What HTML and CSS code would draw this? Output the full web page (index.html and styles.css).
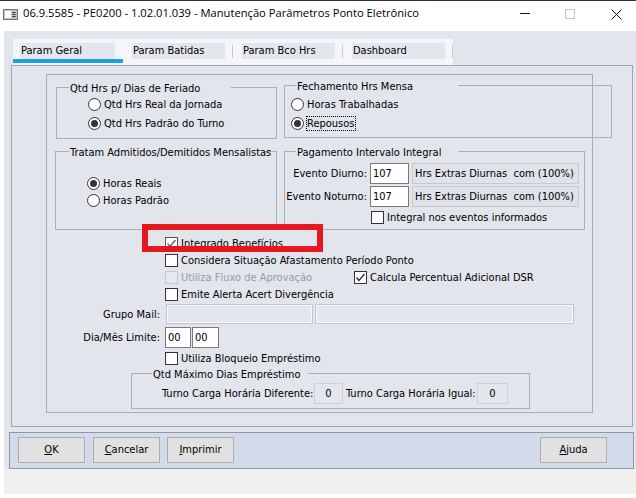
FILE: index.html
```html
<!DOCTYPE html>
<html lang="pt-BR">
<head>
<meta charset="utf-8">
<title>Manutenção Parâmetros Ponto Eletrônico</title>
<link rel="stylesheet" href="styles.css">
</head>
<body>
<div class="window">
  <div class="titlebar">
    <svg class="appicon" width="15" height="11" viewBox="0 0 15 11"><rect x="0.5" y="0.5" width="14" height="10" fill="#bfc3c8" stroke="#6f747b"/><rect x="2" y="2" width="6" height="7" fill="#fff"/><path d="M9.5 3.5h3M9.5 5.5h3M9.5 7.5h3" stroke="#2b2b2b"/></svg>
    <span class="title">06.9.5585 - PE0200 - 1.02.01.039 - Manutenção Parâmetros Ponto Eletrônico</span>
    <svg class="ctl min" width="10" height="1" viewBox="0 0 10 1"><rect width="10" height="1" fill="#111"/></svg>
    <svg class="ctl max" width="10" height="10" viewBox="0 0 10 10"><rect x="0.5" y="0.5" width="9" height="9" fill="none" stroke="#c4c4c4"/></svg>
    <svg class="ctl close" width="11" height="11" viewBox="0 0 11 11"><path d="M0.5 0.5L10.5 10.5M10.5 0.5L0.5 10.5" stroke="#111" stroke-width="1"/></svg>
  </div>

  <div class="client">
    <div class="tabs">
      <div class="tab active"><span class="tlabel">Param Geral</span><span class="ink"></span></div>
      <div class="tab"><span class="tlabel">Param Batidas</span><span class="tsep"></span></div>
      <div class="tab"><span class="tlabel">Param Bco Hrs</span><span class="tsep"></span></div>
      <div class="tab"><span class="tlabel">Dashboard</span><span class="tsep"></span></div>
    </div>

    <div class="panel">
      <div class="inner">
        <div class="grow">
          <fieldset class="grp g1">
            <legend class="lg1">Qtd Hrs p/ Dias de Feriado</legend>
            <div class="opt"><span class="radio"></span>Qtd Hrs Real da Jornada</div>
            <div class="opt"><span class="radio on"></span>Qtd Hrs Padrão do Turno</div>
          </fieldset>
          <fieldset class="grp g2">
            <legend class="lg2">Fechamento Hrs Mensa</legend>
            <div class="opt"><span class="radio"></span>Horas Trabalhadas</div>
            <div class="opt"><span class="radio on"></span><span class="focus">Repousos</span></div>
          </fieldset>
        </div>

        <div class="grow row2">
          <fieldset class="grp g3">
            <legend class="lg3">Tratam Admitidos/Demitidos Mensalistas</legend>
            <div class="opt short"><span class="radio on"></span>Horas Reais</div>
            <div class="opt short"><span class="radio"></span>Horas Padrão</div>
          </fieldset>
          <fieldset class="grp g4">
            <legend class="lg4">Pagamento Intervalo Integral</legend>
            <div class="evrow">
              <span class="evlabel">Evento Diurno:</span>
              <span class="inp ev">107</span>
              <span class="desc">Hrs Extras Diurnas&nbsp; com (100%)</span>
            </div>
            <div class="evrow">
              <span class="evlabel">Evento Noturno:</span>
              <span class="inp ev">107</span>
              <span class="desc">Hrs Extras Diurnas&nbsp; com (100%)</span>
            </div>
            <div class="cbrow integral"><span class="box"></span>Integral nos eventos informados</div>
          </fieldset>
        </div>

        <div class="checks">
          <div class="cbrow"><span class="box chk soft"><svg width="11" height="11" viewBox="0 0 11 11"><path d="M1.5 5.5L4 8.5L9.5 2" fill="none" stroke="#5a5a5a" stroke-width="1.2"/></svg></span>Integrado Benefícios</div>
          <div class="cbrow"><span class="box"></span>Considera Situação Afastamento Período Ponto</div>
          <div class="cbrow">
            <span class="cbitem wide disabled"><span class="box off"></span>Utiliza Fluxo de Aprovação</span>
            <span class="cbitem"><span class="box chk"><svg width="11" height="11" viewBox="0 0 11 11"><path d="M1.5 5.5L4 8.5L9.5 2" fill="none" stroke="#222" stroke-width="1.2"/></svg></span>Calcula Percentual Adicional DSR</span>
          </div>
          <div class="cbrow"><span class="box"></span>Emite Alerta Acert Divergência</div>
        </div>

        <div class="frow mail">
          <span class="flabel">Grupo Mail:</span>
          <span class="inp dis m1"></span>
          <span class="inp dis m2"></span>
        </div>
        <div class="frow dia">
          <span class="flabel">Dia/Mês Limite:</span>
          <span class="inp d1">00</span>
          <span class="inp d2">00</span>
        </div>
        <div class="cbrow bloq"><span class="box"></span>Utiliza Bloqueio Empréstimo</div>

        <fieldset class="grp g5">
          <legend class="lg5">Qtd Máximo Dias Empréstimo</legend>
          <div class="turno">
            <span class="tl1">Turno Carga Horária Diferente:</span>
            <span class="inp zero z1">0</span>
            <span class="tl2">Turno Carga Horária Igual:</span>
            <span class="inp zero z2">0</span>
          </div>
        </fieldset>
      </div>
    </div>

    <div class="buttons">
      <span class="btn b-ok"><u>O</u>K</span>
      <span class="btn b-cancel"><u>C</u>ancelar</span>
      <span class="btn"><u>I</u>mprimir</span>
      <span class="btn b-help"><u>A</u>juda</span>
    </div>
  </div>
  <div class="status"></div>

  <div class="highlight"></div>
</div>
</body>
</html>
```
FILE: styles.css
```css
* { box-sizing: border-box; }
html, body { margin: 0; padding: 0; }
body {
  width: 636px;
  height: 498px;
  overflow: hidden;
  background: #fff;
  color: #000;
  font-family: "DejaVu Sans Condensed", "DejaVu Sans", sans-serif;
  font-stretch: condensed;
  font-size: 11px;
}
.window {
  position: relative;
  width: 636px;
  height: 498px;
  display: flex;
  flex-direction: column;
}

/* title bar */
.titlebar {
  height: 31px;
  border-top: 1px solid #2d3440;
  display: flex;
  align-items: flex-start;
  flex-shrink: 0;
}
.appicon { margin: 8px 0 0 3px; }
.title {
  margin: 4px 0 0 5px;
  font-family: "Open Sans", sans-serif;
  font-stretch: normal;
  font-size: 11.2px;
  line-height: 16px;
  white-space: nowrap;
}
.ctl.min { margin: 12px 0 0 auto; }
.ctl.max { margin: 8px 0 0 35px; }
.ctl.close { margin: 8px 14px 0 36px; }

/* client area */
.client {
  margin-left: 4px;
  height: 438px;
  flex-shrink: 0;
  background: #e2e5ec;
  display: flex;
  flex-direction: column;
  align-items: flex-start;
}
.tabs {
  margin: 8px 0 0 9px;
  width: 440px;
  height: 26px;
  background: #f5f6f9;
  display: flex;
}
.tab {
  width: 110px;
  height: 26px;
  display: flex;
  align-items: flex-start;
}
.tlabel {
  margin: 4px 0 0 9px;
  width: 93px;
  height: 16px;
  line-height: 16px;
  padding-left: 1px;
  background: #e3e6ec;
  white-space: nowrap;
}
.tsep {
  margin: 6px 0 0 7px;
  width: 1px;
  height: 13px;
  background: #c5c9d1;
}
.tab.active { flex-direction: column; }
.tab.active .tlabel { margin-left: 7px; width: 95px; }
.ink {
  width: 110px;
  height: 4px;
  background: #1ba1e2;
}

.panel {
  margin-left: 7px;
  width: 622px;
  height: 362px;
  border: 1px solid #9ea4b0;
  flex-shrink: 0;
}
.inner {
  margin: 8px 0 0 34px;
  width: 547px;
  height: 339px;
  border: 1px solid #a7acb7;
  display: flex;
  flex-direction: column;
  align-items: flex-start;
}

/* group boxes */
.grow { display: flex; align-items: flex-start; }
.grp {
  margin: 0;
  padding: 0;
  min-width: 0;
  border: 1px solid #a9aeb8;
  flex-shrink: 0;
}
.grp legend {
  padding: 3px 0 0 1px;
  line-height: 13px;
  white-space: nowrap;
}
.g1 { margin: 4px 0 0 9px; width: 221px; height: 60px; padding: 0 0 0 31px; }
.g2 { margin: 2px 0 0 7px; width: 328px; height: 61px; padding: 2px 0 0 6px; }
.lg1 { margin-left: -19px; width: 162px; }
.lg2 { margin-left: 5px; width: 162px; }
.row2 { margin-top: 4px; }
.g3 { margin-left: 8px; width: 222px; height: 87px; padding: 16px 0 0 31px; }
.g4 { margin-left: 7px; width: 301px; height: 87px; padding: 4px 0 0 0; }
.lg3 { margin-left: -18px; width: 195px; }
.lg4 { margin-left: 11px; width: 162px; }

.opt {
  height: 19px;
  display: flex;
  align-items: center;
  white-space: nowrap;
}
.opt.short { height: 17px; }
.radio {
  width: 13px;
  height: 13px;
  border: 1px solid #333;
  border-radius: 50%;
  background: #fff;
  margin-right: 3px;
  flex-shrink: 0;
  display: flex;
  align-items: center;
  justify-content: center;
}
.radio.on::after {
  content: "";
  width: 7px;
  height: 7px;
  border-radius: 50%;
  background: #333;
}
.focus {
  outline: 1px dotted #000;
  line-height: 13px;
  padding: 0 1px 0 0;
}

.evrow {
  display: flex;
  align-items: center;
  height: 21px;
  margin-bottom: 2px;
}
.evlabel {
  width: 82px;
  text-align: right;
  margin-right: 3px;
  white-space: nowrap;
}
.inp {
  height: 21px;
  border: 1px solid #7a7a7a;
  background: #fff;
  line-height: 19px;
  padding-left: 2px;
  white-space: nowrap;
  flex-shrink: 0;
}
.ev { width: 39px; }
.desc {
  margin-left: 3px;
  width: 167px;
  height: 21px;
  line-height: 19px;
  padding-left: 2px;
  background: #dfe2e8;
  border: 1px solid #c6c9d0;
  white-space: nowrap;
}

/* checkboxes */
.cbrow {
  height: 17px;
  display: flex;
  align-items: center;
  white-space: nowrap;
}
.integral { margin: 2px 0 0 86px; }
.cbitem { display: flex; align-items: center; }
.cbitem.wide { width: 189px; }
.box {
  width: 13px;
  height: 13px;
  border: 1px solid #333;
  background: #fff;
  margin-right: 3px;
  flex-shrink: 0;
  display: flex;
  align-items: center;
  justify-content: center;
}
.box.soft { border-color: #555; }
.box.off { border-color: #c6c8cc; background: #e6e8ed; }
.disabled { color: #9b9b9b; }
.checks { margin: 5px 0 0 118px; }

.frow { display: flex; align-items: center; }
.flabel { width: 113px; text-align: right; margin-right: 5px; white-space: nowrap; }
.mail { margin-top: 1px; height: 20px; }
.dis {
  height: 20px;
  border-color: #c3c6cc;
  background: #e3e6ec;
  box-shadow: inset 0 0 0 1px #f7f8fa;
}
.m1 { margin-left: 1px; width: 147px; }
.m2 { margin-left: 2px; width: 259px; }
.dia { margin-top: 3px; }
.d1 { width: 26px; }
.d2 { margin-left: 1px; width: 27px; }
.bloq { margin: 2px 0 0 118px; }

.g5 { margin: -2px 0 0 84px; width: 399px; height: 44px; padding: 2px 0 0 30px; }
.lg5 { margin-left: -10px; width: 156px; }
.turno { display: flex; align-items: center; height: 21px; }
.tl1 { width: 152px; white-space: nowrap; }
.tl2 { margin-left: 3px; width: 131px; white-space: nowrap; }
.zero {
  text-align: center;
  padding: 0;
  background: #e3e6ec;
  border-color: #cdd0d6;
}
.z1 { width: 29px; }
.z2 { width: 31px; }

/* buttons */
.buttons {
  margin: 5px 0 0 5px;
  width: 625px;
  height: 37px;
  background: #d3dbea;
  border: 1px solid #8f98a9;
  display: flex;
  align-items: flex-start;
  padding: 4px 26px 0 8px;
  flex-shrink: 0;
}
.btn {
  width: 67px;
  height: 26px;
  line-height: 24px;
  text-align: center;
  background: #e1e1e1;
  border: 1px solid #adadad;
}
.b-ok { margin-right: 8px; }
.b-cancel { margin-right: 7px; }
.b-help { margin-left: auto; }

.status {
  margin-left: 4px;
  height: 25px;
  background: #f0f0f0;
  flex-shrink: 0;
}

.highlight {
  position: absolute;
  left: 142px;
  top: 224px;
  width: 181px;
  height: 28px;
  border: 6px solid #e5181f;
}
```
